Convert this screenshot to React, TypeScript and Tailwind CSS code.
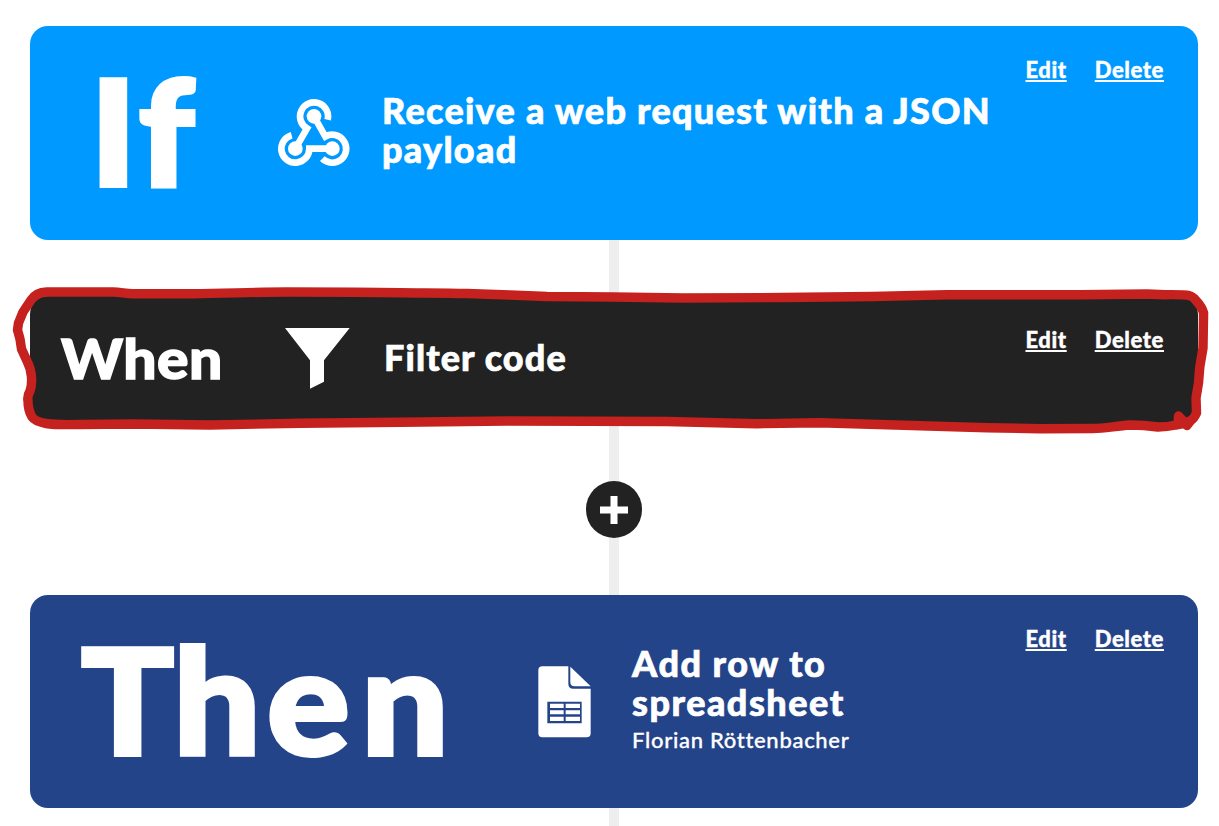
import type { ReactNode } from "react";

function Actions() {
  return (
    <div className="absolute right-[34px] top-[33px] flex gap-7 text-[22px] leading-[22px] font-black tracking-[0.6px] [-webkit-text-stroke:0.4px_white]">
      <a className="underline decoration-2 underline-offset-2">Edit</a>
      <a className="underline decoration-2 underline-offset-2">Delete</a>
    </div>
  );
}

function Card({ className, children }: { className: string; children: ReactNode }) {
  return (
    <section className={`relative flex w-[1168px] shrink-0 items-start rounded-[18px] text-white ${className}`}>
      {children}
      <Actions />
    </section>
  );
}

function Connector({ className }: { className: string }) {
  return <div className={`w-[10px] shrink-0 bg-[#eeeeee] ${className}`} />;
}

function WebhookIcon() {
  return (
    <svg className="h-[72px] w-[76px]" viewBox="48 54 228 216" fill="none" stroke="#fff" strokeWidth="20">
      <path d="M203 119A42 42 0 1 0 141 145.500L106 206" />
      <path d="M162 109L196 169.600A42 42 0 1 1 187 236" />
      <path d="M217 206H148A42 42 0 1 1 95 165.500" />
      <g fill="#fff" stroke="none">
        <circle cx="162" cy="109" r="22" />
        <circle cx="106" cy="206" r="22" />
        <circle cx="217" cy="206" r="22" />
      </g>
    </svg>
  );
}

function FunnelIcon() {
  return (
    <svg className="h-[61px] w-[65px]" viewBox="285 328 65 61" fill="#fff">
      <path d="M285 328H349.700L324 360.300V381.700L310 388.700V360.300Z" />
    </svg>
  );
}

function SheetIcon() {
  return (
    <svg className="h-[72px] w-[54px]" viewBox="54 77 162 216" fill="#fff">
      <path d="M67 78H145V130Q145 145 160 145H212V279Q212 291 200 291H67Q55 291 55 279V90Q55 78 67 78Z" />
      <path d="M151 79L212 138H164Q151 138 151 125Z" />
      <path fill="#24448a" d="M82 184H185V249H82Z" />
      <path d="M90 190H131V203H90ZM137 190H180V203H137ZM90 210H131V222H90ZM137 210H180V222H137ZM90 229H131V242H90ZM137 229H180V242H137Z" />
    </svg>
  );
}

function MarkerOutline() {
  return (
    <svg
      className="pointer-events-none absolute left-0 top-[270px] h-[180px] w-[1219px]"
      viewBox="0 270 1219 180"
      fill="none"
      stroke="#c5211f"
      strokeWidth="9.4"
      strokeLinecap="round"
      strokeLinejoin="round"
    >
      <path d="M46.700 292H113C121 292 125 293.700 133 293.700H193C225 293.500 255 292 287 292C325 292 365 292 400 292.700C425 293 445 293 467 293.500L510 295L547 296.500L613 297L683 298L783 297.500L873 296.500L947 294.700H1080L1147 294L1165 294.700Q1185 294.500 1189 295.500Q1193 296.500 1196 300.500Q1202 307 1203.600 313L1203 348L1199.800 367L1198.500 383L1196 398L1196.500 413Q1194 419 1190 421Q1184 424 1176 425Q1167 427 1158 427Q1144 425 1130 425C1115 426 1105 428.500 1093 428.500L1040 428.700L987 427.700L820 422.700L757 423.700L667 421.500L507 421L400 422.300L300 423.300L210 425L133 424L80 424.500Q55 425 46 423.500Q35 421.500 32 417Q28 410 28 401Q27 396 30 391Q32 386 31.500 377Q31 369 27 361L21.500 349L20 339L17.500 330L18.500 323L23 312L31 300Q36 292.500 46.700 292" />
      <path fill="#c5211f" d="M1178.500 416L1187 425.500L1190 421.500L1178 424Z" />
    </svg>
  );
}

export default function App() {
  return (
    <main className="relative flex h-[826px] w-[1219px] flex-col items-center overflow-hidden bg-white pl-[9px] pt-[26px] font-['Lato','Avenir_Next',sans-serif]">
      <Card className="h-[214px] bg-[#0099ff]">
        <h1 className="ml-[60px] mt-[27px] w-[186px] origin-left scale-x-105 whitespace-nowrap text-[147px] leading-[153px] font-black tracking-[4px] [-webkit-text-stroke:4px_white]">If</h1>
        <div className="mt-[72px] w-[106px]"><WebhookIcon /></div>
        <p className="mt-[65px] w-[640px] text-[36px] leading-[39px] font-black tracking-[1.28px] [-webkit-text-stroke:0.7px_white]">Receive a web request with a JSON payload</p>
      </Card>
      <Connector className="h-14" />
      <Card className="h-[128px] bg-[#222222]">
        <h2 className="ml-[31px] mt-[34px] w-[224px] origin-left scale-x-105 whitespace-nowrap text-[56px] leading-[56px] font-black tracking-[0.5px] [-webkit-text-stroke:1.4px_white]">When</h2>
        <div className="mt-8 w-[99px]"><FunnelIcon /></div>
        <p className="mt-[42px] text-[36px] leading-[39px] font-black tracking-[1.1px] [-webkit-text-stroke:0.7px_white]">Filter code</p>
      </Card>
      <Connector className="h-[57px]" />
      <button className="flex h-[57px] w-14 shrink-0 items-center justify-center rounded-full bg-[#222222]">
        <svg className="h-7 w-7" viewBox="0 0 28 28" stroke="#fff" strokeWidth="7"><path d="M14 0V28M0 14H28" /></svg>
      </button>
      <Connector className="h-[57px]" />
      <Card className="h-[213px] bg-[#24448a]">
        <h1 className="ml-[51px] mt-[27px] w-[457px] origin-left scale-x-105 whitespace-nowrap text-[147px] leading-[153px] font-black tracking-[6px] [-webkit-text-stroke:4px_white]">
          <span className="tracking-[-1px]">T</span>h<span className="tracking-[11px]">e</span>n
        </h1>
        <div className="mt-[71px] w-[94px]"><SheetIcon /></div>
        <div className="mt-[49px] w-[260px]">
          <p className="text-[36px] leading-[39px] font-black tracking-[1.5px] [-webkit-text-stroke:0.7px_white]">Add row to spreadsheet</p>
          <p className="mt-1 text-[22px] leading-[28px] font-medium tracking-[0.7px] [-webkit-text-stroke:0.3px_white]">Florian Röttenbacher</p>
        </div>
      </Card>
      <Connector className="h-[18px]" />
      <MarkerOutline />
    </main>
  );
}
